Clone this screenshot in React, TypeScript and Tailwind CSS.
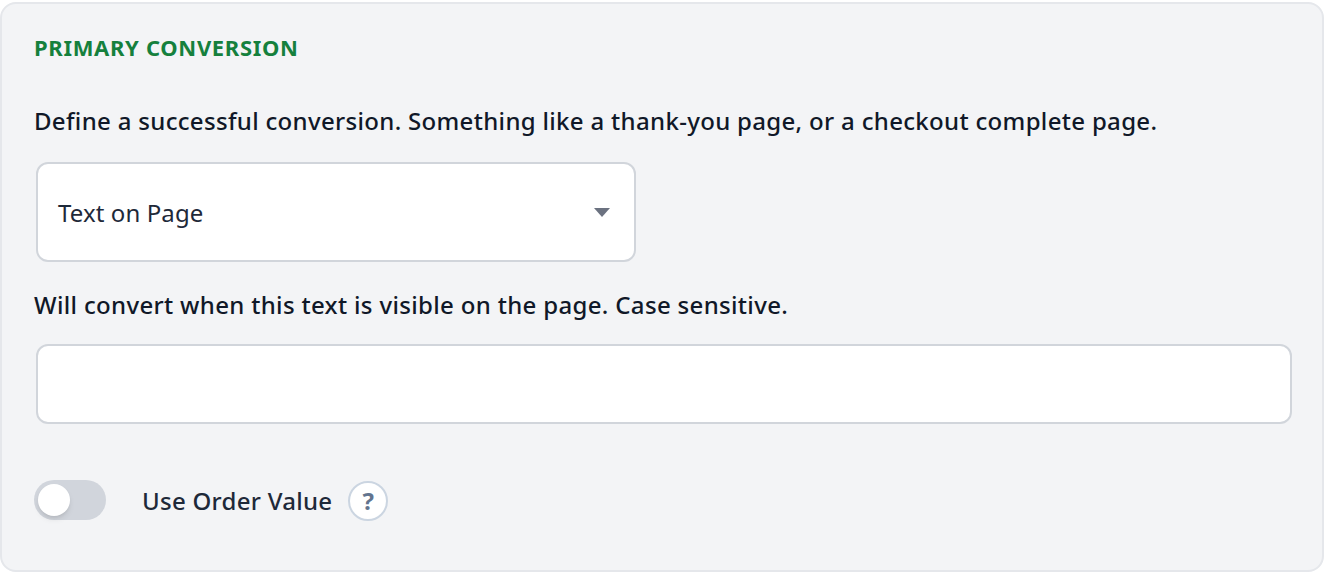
export default function App() {
  return (
    <div className="h-[572px] bg-white pt-[2px] font-['Noto_Sans',sans-serif]">
      <div className="h-[570px] rounded-2xl border-2 border-gray-200 bg-gray-100 pl-[32px] pr-[30px] pt-[29px]">
        <h2 className="text-[22px] font-bold leading-[28px] tracking-[0.67px] text-[#15803d]">PRIMARY CONVERSION</h2>

        <p className="mt-[44px] text-[24px] font-medium leading-[32px] tracking-[0.32px] text-gray-900">
          Define a successful conversion. Something like a thank-you page, or a checkout complete page.
        </p>

        <div className="ml-[2px] mt-[25px] flex h-[100px] w-[600px] items-center justify-between rounded-xl border-2 border-[#d1d5db] bg-white pl-[20px] pr-[24px]">
          <span className="pt-[2px] text-[24px] tracking-[0.1px] text-gray-800">Text on Page</span>
          <svg width="16" height="9" viewBox="0 0 16 9">
            <path d="M0 0h16l-8 9z" fill="#6b7280" />
          </svg>
        </div>

        <p className="mt-[27px] text-[24px] font-medium leading-[32px] tracking-[0.33px] text-gray-900">
          Will convert when this text is visible on the page. Case sensitive.
        </p>

        <input className="ml-[2px] mt-[23px] block h-[80px] w-[1256px] rounded-xl border-2 border-[#d1d5db] bg-white" />

        <div className="mt-[55px] flex items-center">
          <div className="flex h-[40px] w-[72px] items-center rounded-full bg-gray-300 pl-[4px]">
            <div className="h-[32px] w-[32px] rounded-full bg-white shadow-md" />
          </div>
          <span className="ml-[36px] pt-[2px] text-[24px] font-medium tracking-[0.27px] text-gray-800">Use Order Value</span>
          <div className="ml-[16px] mt-[2px] flex h-[40px] w-[40px] items-center justify-center rounded-full border-2 border-[#cbd5e1] bg-white text-[24px] font-bold text-slate-500">
            ?
          </div>
        </div>
      </div>
    </div>
  )
}
